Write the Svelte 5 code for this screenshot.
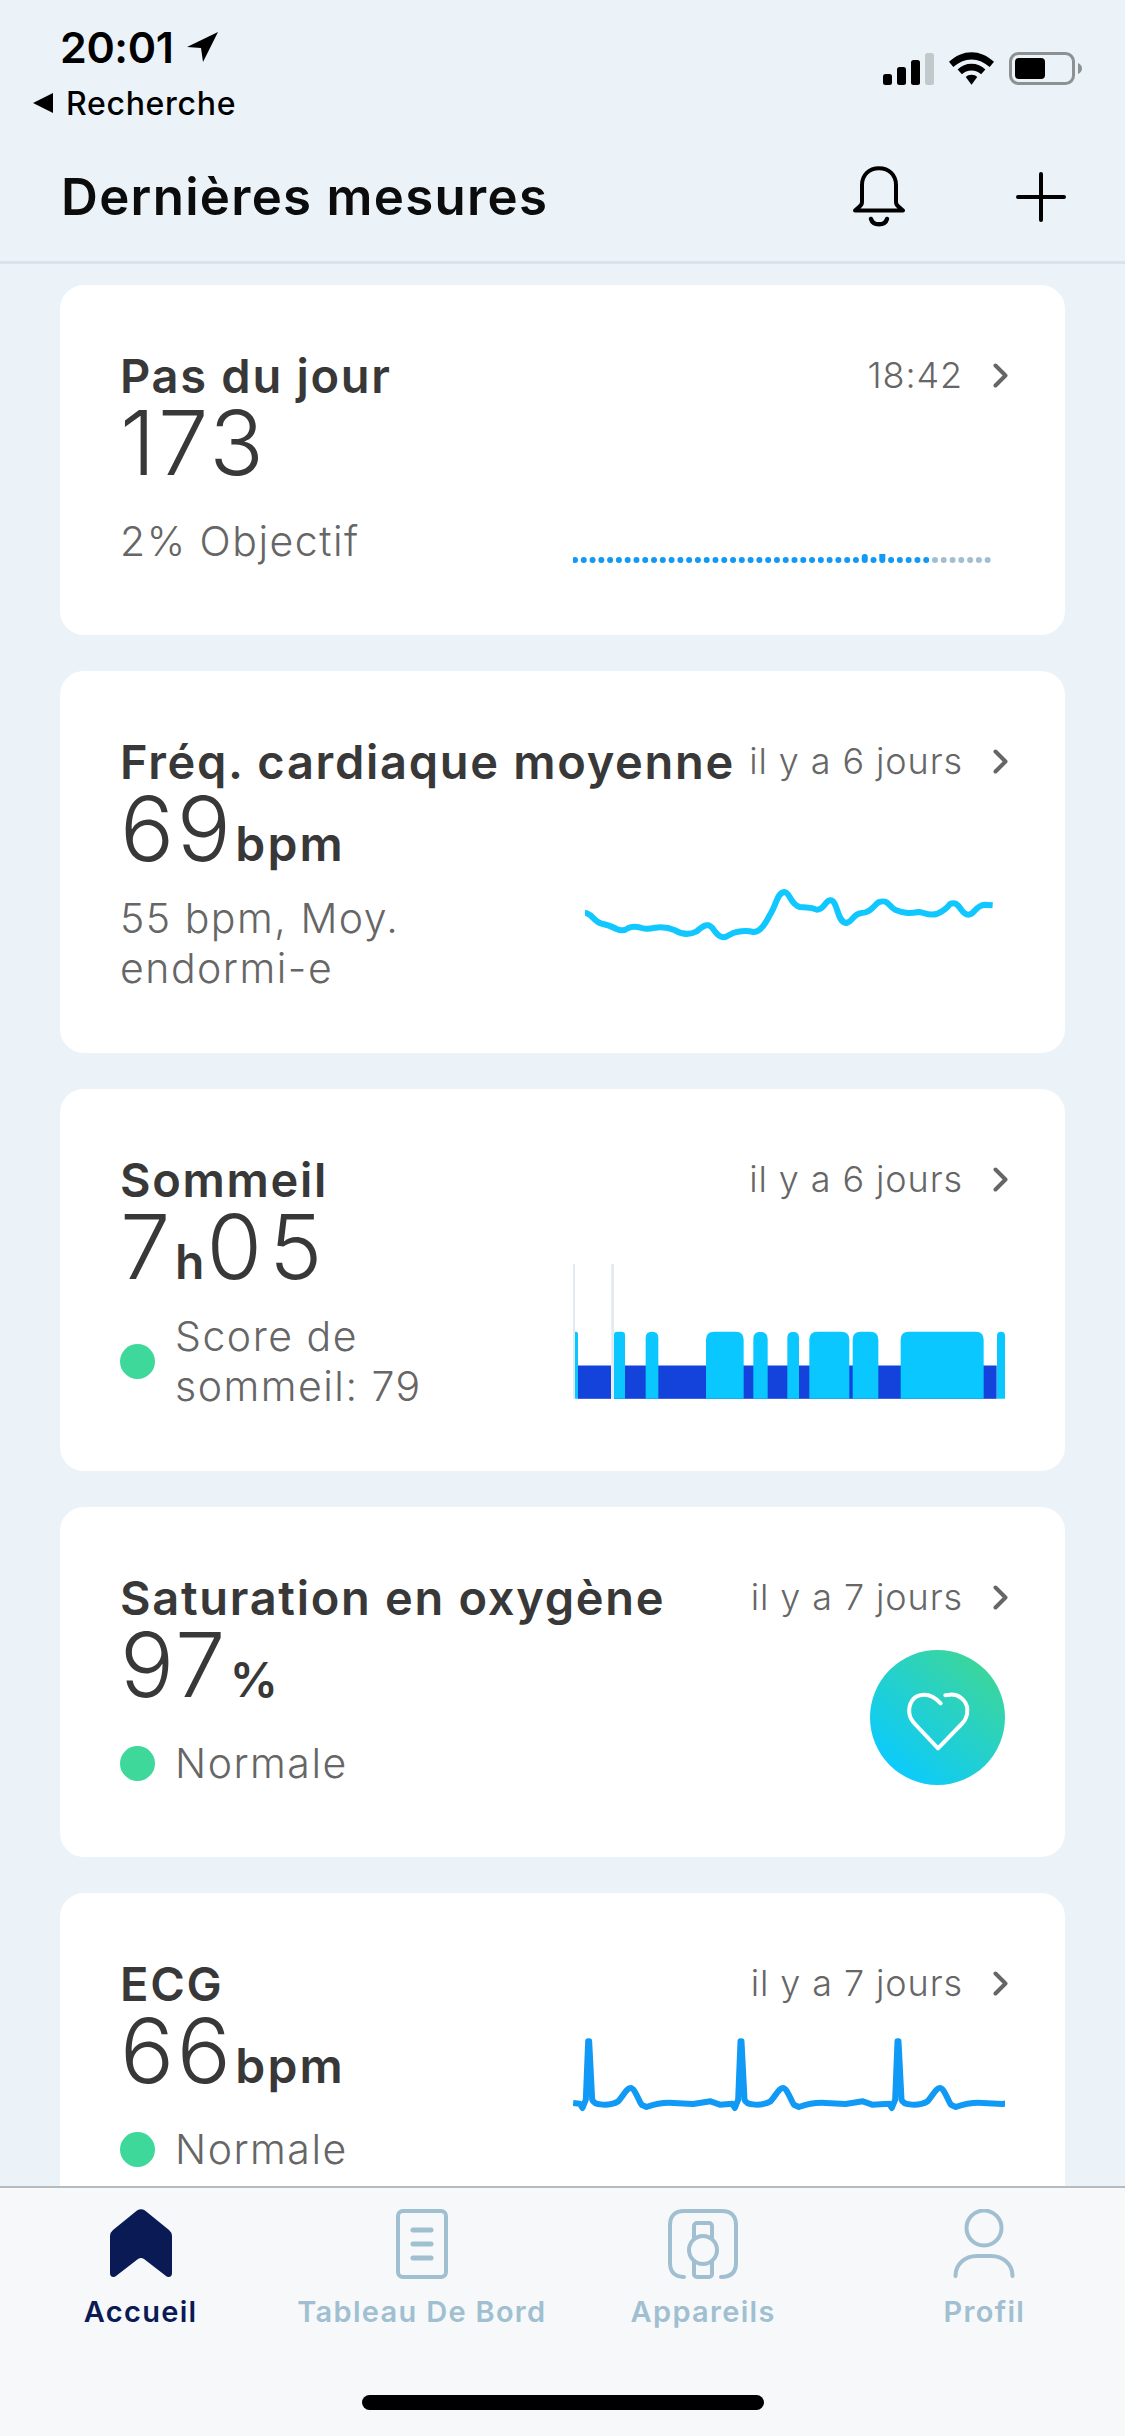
<script>
    const dots = Array.from({ length: 48 }, (_, i) => ({
        x: 2 + i * 8.78,
        h: i === 33 ? 9 : i === 35 ? 11 : 6,
        off: i >= 41
    }));

    const sleepDeep = [[54, 153], [162, 1310]];
    const sleepLight = [
        [162, 195, 10], [257, 295, 18], [438, 551, 24], [580, 623, 22], [682, 717, 18],
        [748, 868, 24], [878, 955, 24], [1022, 1271, 24], [1311, 1335, 12]
    ];

    const beat = (x) => `L${x + 20},312 L${x + 28},325 L${x + 38},300 L${x + 45},125 L${x + 48},125 L${x + 57},300 C${x + 62},318 ${x + 110},320 ${x + 135},305 C${x + 150},290 ${x + 160},265 ${x + 172},265 C${x + 185},265 ${x + 195},300 ${x + 205},315 L${x + 220},322 C${x + 240},315 ${x + 270},308 ${x + 300},310 L${x + 360},313 L${x + 412},305 L${x + 440},315`;
    const ecg = `M40,310 ${beat(40)} ${beat(497)} ${beat(968)} L1335,312`;

    const cards = [
        { kind: 'steps', title: 'Pas du jour', time: '18:42', value: '173', sub: ['2% Objectif'] },
        { kind: 'heart', title: 'Fréq. cardiaque moyenne', time: 'il y a 6 jours', value: '69', unit: 'bpm', sub: ['55 bpm, Moy.', 'endormi-e'] },
        { kind: 'sleep', title: 'Sommeil', time: 'il y a 6 jours', value: '7', unit: 'h', after: '05', dot: true, sub: ['Score de', 'sommeil: 79'] },
        { kind: 'oxygen', title: 'Saturation en oxygène', time: 'il y a 7 jours', value: '97', unit: '%', dot: true, sub: ['Normale'] },
        { kind: 'ecg', title: 'ECG', time: 'il y a 7 jours', value: '66', unit: 'bpm', dot: true, sub: ['Normale'] }
    ];
</script>

<div class="page">
    <header class="top">
        <div class="status">
            <div class="status-left">
                <div class="clock">
                    20:01
                    <svg class="locate" viewBox="0 0 31 30"><path d="M31 0 L0 15 L14 16 L16 30 Z" fill="#000" /></svg>
                </div>
                <div class="back">
                    <svg viewBox="0 0 20 20" width="20" height="20"><path d="M20 0 V20 L0 10 Z" fill="#000" /></svg>
                    Recherche
                </div>
            </div>
            <div class="status-right">
                <svg viewBox="0 0 51 32" width="51" height="32">
                    <rect x="0" y="21" width="9" height="11" rx="2.500" fill="#000" />
                    <rect x="14" y="14" width="9" height="18" rx="2.500" fill="#000" />
                    <rect x="28" y="7" width="9" height="25" rx="2.500" fill="#000" />
                    <rect x="42" y="0" width="9" height="32" rx="2.500" fill="#c3c8cb" />
                </svg>
                <svg viewBox="0 0 47 34" width="45" height="33">
                    <path d="M23.500 0 C32 0 40 3.500 47 10 L42.500 15.500 C37 10.500 30.500 7.500 23.500 7.500 C16.500 7.500 10 10.500 4.500 15.500 L0 10 C7 3.500 15 0 23.500 0 Z" fill="#000" />
                    <path d="M23.500 12 C29 12 34 14 38 18 L33.500 23 C31 20.500 27.500 19 23.500 19 C19.500 19 16 20.500 13.500 23 L9 18 C13 14 18 12 23.500 12 Z" fill="#000" />
                    <path d="M23.500 23.500 C26 23.500 28 24.300 29.500 26 L23.500 34 L17.500 26 C19 24.300 21 23.500 23.500 23.500 Z" fill="#000" />
                </svg>
                <svg viewBox="0 0 73 33" width="73" height="33">
                    <rect x="1.500" y="1.500" width="63" height="30" rx="8" fill="none" stroke="#8e9192" stroke-width="3" />
                    <rect x="6" y="6" width="30" height="21" rx="4" fill="#000" />
                    <path d="M69 11 C71.500 12 73 14 73 16.500 C73 19 71.500 21 69 22 Z" fill="#8e9192" />
                </svg>
            </div>
        </div>
        <nav class="bar">
            <h1>Dernières mesures</h1>
            <div class="bar-actions">
                <svg viewBox="0 0 52 61" width="52" height="61" fill="none" stroke="#000" stroke-width="4" stroke-linecap="round" stroke-linejoin="round">
                    <path d="M9 19 C9 9 16 2.300 26 2.300 C36 2.300 43 9 43 19 V36 Q43 39 46 41 L50 44.500 H2 L6 41 Q9 39 9 36 Z" />
                    <path d="M18 53 C20 60 32 60 34 53" stroke-width="4.500" />
                </svg>
                <svg viewBox="0 0 50 50" width="50" height="50" stroke="#000" stroke-width="4" stroke-linecap="round">
                    <path d="M25 2 V48 M2 25 H48" />
                </svg>
            </div>
        </nav>
    </header>

    <main class="list">
        {#each cards as card}
            <section class="card">
                <div class="head">
                    <h2>{card.title}</h2>
                    <span class="time">{card.time}</span>
                    <svg class="chev" viewBox="0 0 15 25" width="15" height="25" fill="none" stroke="#666" stroke-width="4" stroke-linecap="round" stroke-linejoin="round">
                        <path d="M2.500 2.500 L12.500 12.500 L2.500 22.500" />
                    </svg>
                </div>
                <div class="body">
                    <div class="left">
                        <div class="value">
                            {card.value}{#if card.unit}<span class="unit">{card.unit}</span>{/if}{#if card.after}<span class="after">{card.after}</span>{/if}
                        </div>
                        <div class="sub-wrap">
                            {#if card.dot}<span class="dot"></span>{/if}
                            <div class="sub">
                                {#each card.sub as line}<div>{line}</div>{/each}
                            </div>
                        </div>
                    </div>

                    {#if card.kind === 'steps'}
                        <svg class="viz steps" viewBox="0 0 432 12" width="432" height="12">
                            {#each dots as d}
                                <rect x={d.x - 3} y={9 - d.h} width="6" height={d.h} rx="3" fill={d.off ? '#a2bfd2' : '#1099f5'} />
                            {/each}
                        </svg>
                    {:else if card.kind === 'heart'}
                        <svg class="viz pulse" viewBox="0 0 1335 165" width="445" height="55" fill="none" stroke="#10c8ff" stroke-width="18" stroke-linecap="butt" stroke-linejoin="round">
                            <path transform="translate(-75 -80)" d="M75,155 C95,155 100,180 125,187 C145,190 155,195 170,203 C185,210 195,208 205,200 C220,192 235,197 245,200 C258,204 270,203 285,199 C305,196 325,198 345,207 C365,219 385,223 410,210 C425,198 432,190 445,192 C462,195 465,225 490,228 C505,228 510,215 530,212 C550,208 565,208 580,212 C600,212 615,190 630,160 C650,130 650,95 673,92 C690,92 690,130 720,137 C745,140 750,135 770,145 C795,145 795,115 812,117 C835,120 830,185 860,185 C880,180 875,160 905,155 C930,155 940,135 955,123 C985,112 985,135 1005,145 C1030,155 1045,158 1075,152 C1090,152 1105,165 1130,158 C1150,150 1160,142 1170,128 C1200,115 1200,160 1225,160 C1245,160 1245,132 1275,130 L1298,132" />
                        </svg>
                    {:else if card.kind === 'sleep'}
                        <svg class="viz sleep" viewBox="39 72 1296 404" width="432" height="135">
                            <rect x="39" y="72" width="6" height="404" fill="#e2e9f0" />
                            <rect x="154" y="72" width="8" height="404" fill="#e2e9f0" />
                            {#each sleepDeep as s}
                                <rect x={s[0]} y="376" width={s[1] - s[0]} height="100" fill="#1443dc" />
                            {/each}
                            <path d="M45 476 V275 H48 Q54 275 54 281 V476 Z" fill="#0bc7ff" />
                            {#each sleepLight as b}
                                <path d="M{b[0]} 476 V{275 + b[2]} Q{b[0]} 275 {b[0] + b[2]} 275 H{b[1] - b[2]} Q{b[1]} 275 {b[1]} {275 + b[2]} V476 Z" fill="#0bc7ff" />
                            {/each}
                        </svg>
                    {:else if card.kind === 'oxygen'}
                        <svg class="viz badge" viewBox="150 90 405 405" width="135" height="135">
                            <defs>
                                <linearGradient id="badge-fill" x1="0.85" y1="0.1" x2="0.2" y2="0.85">
                                    <stop offset="0" stop-color="#3cd69b" />
                                    <stop offset="1" stop-color="#0ecbf8" />
                                </linearGradient>
                            </defs>
                            <circle cx="352.500" cy="292.500" r="202.500" fill="url(#badge-fill)" />
                            <path d="M362,250 C345,232 325,222 305,225 C280,228 265,250 268,280 C270,295 278,305 285,312 L354,385 L425,312 C435,302 443,290 442,268 C440,240 415,222 390,224 L376,226" fill="none" stroke="#fff" stroke-width="12" stroke-linecap="round" stroke-linejoin="round" />
                        </svg>
                    {:else if card.kind === 'ecg'}
                        <svg class="viz trace" viewBox="40 100 1295 240" width="432" height="80">
                            <path d={ecg} fill="none" stroke="#1099f5" stroke-width="18" stroke-linejoin="round" />
                        </svg>
                    {/if}
                </div>
            </section>
        {/each}
    </main>

    <footer class="tabs">
        <div class="tab active">
            <svg viewBox="0 0 62 68" width="62" height="68"><path d="M27 1.500 Q31 -1 35 1.500 L59 21 Q62 23.500 62 27 V64 Q62 68 58.500 68 Q57 68 56 67 L34 50 Q31 48 28 50 L6 67 Q5 68 3.500 68 Q0 68 0 64 V27 Q0 23.500 3 21 Z" fill="#0a1a55" /></svg>
            <span>Accueil</span>
        </div>
        <div class="tab">
            <svg viewBox="0 0 52 70" width="52" height="70" fill="none" stroke="#a0bfd0" stroke-width="4">
                <rect x="2" y="2" width="48" height="66" rx="5" />
                <path d="M17 21 H35 M17 35 H35 M17 49 H35" stroke-width="5" stroke-linecap="round" />
            </svg>
            <span>Tableau De Bord</span>
        </div>
        <div class="tab">
            <svg viewBox="0 0 70 70" width="70" height="70" fill="none" stroke="#a0bfd0" stroke-width="4" stroke-linecap="round">
                <path d="M16 68 C6 68 2 62 2 54 V16 C2 7 7 2 16 2 H54 C63 2 68 7 68 16 V54 C68 62 64 68 53 68" />
                <rect x="26" y="14" width="18" height="54" rx="3" />
                <circle cx="35" cy="41" r="14" fill="#f6f8fa" />
            </svg>
            <span>Appareils</span>
        </div>
        <div class="tab">
            <svg viewBox="0 0 62 70" width="62" height="70" fill="none" stroke="#a0bfd0" stroke-width="4" stroke-linecap="round">
                <circle cx="31" cy="19" r="17.500" />
                <path d="M2.500 67 C2.500 55 12 47 24 47 H38 C50 47 59.500 55 59.500 67" />
            </svg>
            <span>Profil</span>
        </div>
        <div class="home-bar"></div>
    </footer>
</div>

<style>
    :global(body) {
        margin: 0;
        background: #ebf3f9;
    }

    .page {
        width: 1125px;
        height: 2436px;
        display: flex;
        flex-direction: column;
        overflow: hidden;
        font-family: Inter, "Liberation Sans", sans-serif;
        background: #ebf3f9;
    }

    .top {
        flex: none;
        border-bottom: 3px solid #d8e4ea;
    }

    .status {
        height: 132px;
        box-sizing: border-box;
        display: flex;
        justify-content: space-between;
        padding: 20px 43px 0 33px;
    }

    .clock {
        display: flex;
        align-items: center;
        gap: 14px;
        height: 54px;
        padding-left: 27px;
        font-size: 43px;
        font-weight: 600;
        letter-spacing: -0.4px;
        color: #000;
    }

    .locate {
        width: 31px;
        height: 30px;
    }

    .back {
        display: flex;
        align-items: center;
        gap: 13px;
        height: 40px;
        margin-top: 9px;
        font-size: 32px;
        font-weight: 500;
        letter-spacing: 0.7px;
        color: #000;
    }

    .status-right {
        display: flex;
        align-items: flex-end;
        gap: 15px;
        height: 33px;
        margin-top: 32px;
    }

    .bar {
        height: 129px;
        box-sizing: border-box;
        display: flex;
        align-items: center;
        justify-content: space-between;
        padding: 0 59px 0 61px;
    }

    h1 {
        margin: 0;
        font-size: 51px;
        font-weight: 600;
        letter-spacing: 1.3px;
        color: #0c0c0c;
    }

    .bar-actions {
        display: flex;
        align-items: center;
        gap: 111px;
    }

    .list {
        flex: 1;
        min-height: 0;
        overflow: hidden;
        box-sizing: border-box;
        display: flex;
        flex-direction: column;
        gap: 36px;
        padding: 21px 60px 0;
    }

    .card {
        flex: none;
        box-sizing: border-box;
        min-height: 350px;
        display: flex;
        flex-direction: column;
        padding: 62px 57px 60px 60px;
        background: #fff;
        border-radius: 24px;
    }

    .head {
        display: flex;
        align-items: center;
        height: 56px;
    }

    h2 {
        flex: 1;
        margin: 0;
        font-size: 47px;
        font-weight: 600;
        letter-spacing: 1.7px;
        color: #383838;
        white-space: nowrap;
    }

    .time {
        font-size: 36px;
        font-weight: 300;
        letter-spacing: 0.9px;
        color: #666;
    }

    .chev {
        flex: none;
        margin-left: 30px;
    }

    .body {
        flex: 1;
        display: flex;
        justify-content: space-between;
    }

    .left {
        display: flex;
        flex-direction: column;
    }

    .value {
        height: 84px;
        margin-top: -2px;
        font-size: 90px;
        font-weight: 300;
        line-height: 84px;
        letter-spacing: 2.5px;
        color: #383838;
    }

    .unit {
        margin-left: 2px;
        font-size: 48px;
        font-weight: 600;
        letter-spacing: 2.2px;
    }

    .after {
        letter-spacing: 7px;
    }

    .sub-wrap {
        flex: 1;
        display: flex;
        align-items: center;
        gap: 20px;
        margin-top: 22px;
    }

    .dot {
        flex: none;
        width: 35px;
        height: 35px;
        border-radius: 50%;
        background: #3fd89b;
    }

    .sub {
        font-size: 41px;
        font-weight: 300;
        line-height: 50px;
        letter-spacing: 1.5px;
        color: #666;
    }

    .viz {
        flex: none;
        margin-right: 3px;
    }

    .steps { margin-top: 151px; }
    .pulse { margin: 99px -22px 0 0; }
    .sleep { margin-top: 57px; }
    .badge { margin-top: 25px; }
    .trace { margin-top: 22px; }

    .tabs {
        flex: none;
        height: 250px;
        box-sizing: border-box;
        display: grid;
        grid-template-columns: repeat(4, 1fr);
        grid-template-rows: 148px 1fr;
        padding-top: 21px;
        background: #f6f8fa;
        border-top: 2px solid #b5bcc0;
    }

    .tab {
        display: flex;
        flex-direction: column;
        align-items: center;
        gap: 15px;
        font-size: 29px;
        font-weight: 600;
        letter-spacing: 1.3px;
        white-space: nowrap;
        color: #a0bfd0;
    }

    .tab.active {
        color: #0a1a55;
    }

    .tab.active svg {
        margin-bottom: 2px;
    }

    .home-bar {
        grid-column: 1 / -1;
        justify-self: center;
        width: 402px;
        height: 15px;
        margin-top: 38px;
        border-radius: 8px;
        background: #000;
    }
</style>
